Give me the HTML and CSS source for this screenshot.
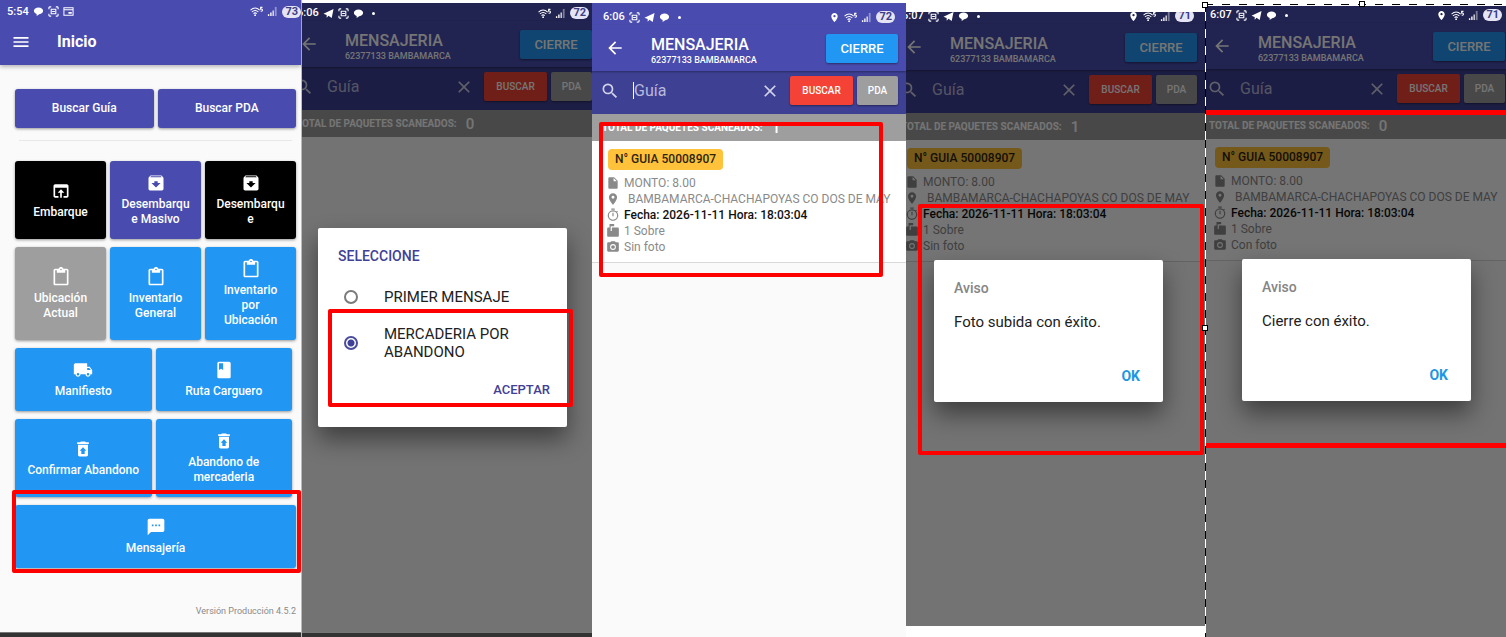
FILE: index.html
```
<!DOCTYPE html>
<html lang="es">
<head>
<meta charset="utf-8">
<title>Mensajería</title>
<link rel="stylesheet" href="styles.css">
</head>
<body>
<svg class="defs" aria-hidden="true">
  <symbol id="chat" viewBox="0 0 24 24"><path d="M12 3C6.500 3 2 6 2 10.500 2 14 5 17 8 17.600V22l5.500-4.200C19 17.500 22 14.500 22 10.500 22 6 17.500 3 12 3z"/></symbol>
  <symbol id="frame" viewBox="0 0 24 24"><path fill="none" stroke="currentColor" stroke-width="2.400" d="M2 7V4q0-2 2-2h3M17 2h3q2 0 2 2v3M22 17v3q0 2-2 2h-3M7 22H4q-2 0-2-2v-3M7 7h10v10H7zM9 12h6"/></symbol>
  <symbol id="news" viewBox="0 0 24 24"><path fill="none" stroke="currentColor" stroke-width="2.200" d="M2 4h20v16H2zM2 8h20M13 14h5v2h-5z"/></symbol>
  <symbol id="send" viewBox="0 0 24 24"><path d="M1 12.500 23 2l-4 20-7-5-4 4v-6z"/></symbol>
  <symbol id="wifi" viewBox="0 0 28 24"><path fill="none" stroke="currentColor" stroke-width="2.200" d="M1 9q10-9 20 0M4 13q7-6 14 0M7.500 16.500q3.500-3 7 0M27 3h-4v4q4-1 4 2t-4 2"/><circle cx="11" cy="20" r="2"/></symbol>
  <symbol id="signal" viewBox="0 0 24 24"><path d="M2 18h3v4H2zM7 14h3v8H7z"/><path opacity=".85" d="M12 10h3v12h-3z"/><path opacity=".4" d="M17 2h4v20h-4z"/></symbol>
  <symbol id="pin" viewBox="0 0 24 24"><path d="M12 2C8.130 2 5 5.130 5 9c0 5.250 7 13 7 13s7-7.750 7-13c0-3.870-3.130-7-7-7zm0 9.500a2.500 2.500 0 0 1 0-5 2.500 2.500 0 0 1 0 5z"/></symbol>
  <symbol id="menu" viewBox="0 0 24 24"><path d="M3 18h18v-2H3v2zm0-5h18v-2H3v2zm0-7v2h18V6H3z"/></symbol>
  <symbol id="back" viewBox="0 0 24 24"><path d="M20 11H7.830l5.590-5.590L12 4l-8 8 8 8 1.410-1.410L7.830 13H20v-2z"/></symbol>
  <symbol id="search" viewBox="0 0 24 24"><path d="M15.500 14h-.79l-.28-.27A6.470 6.470 0 0 0 16 9.500 6.500 6.500 0 1 0 9.500 16c1.610 0 3.090-.59 4.230-1.570l.27.28v.79l5 4.990L20.490 19l-4.990-5zm-6 0C7.010 14 5 11.990 5 9.500S7.010 5 9.500 5 14 7.010 14 9.500 11.990 14 9.500 14z"/></symbol>
  <symbol id="close" viewBox="0 0 24 24"><path d="M19 6.410 17.590 5 12 10.590 6.410 5 5 6.410 10.590 12 5 17.590 6.410 19 12 13.410 17.590 19 19 17.590 13.410 12z"/></symbol>
  <symbol id="open" viewBox="0 0 24 24"><path d="M19 4H5c-1.110 0-2 .9-2 2v12c0 1.100.89 2 2 2h4v-2H5V8h14v10h-4v2h4c1.100 0 2-.9 2-2V6c0-1.100-.89-2-2-2zm-7 6-4 4h3v6h2v-6h3l-4-4z"/></symbol>
  <symbol id="archive" viewBox="0 0 24 24"><path d="m20.540 5.230-1.390-1.680C18.880 3.210 18.470 3 18 3H6c-.47 0-.88.21-1.160.55L3.460 5.230C3.170 5.570 3 6.020 3 6.500V19c0 1.100.9 2 2 2h14c1.100 0 2-.9 2-2V6.500c0-.48-.17-.93-.46-1.270zM12 17.500 6.500 12H10v-2h4v2h3.500L12 17.500zM5.120 5l.81-1h12l.94 1H5.120z"/></symbol>
  <symbol id="paste" viewBox="0 0 24 24"><path d="M19 2h-4.180C14.400.84 13.300 0 12 0S9.600.84 9.180 2H5c-1.100 0-2 .9-2 2v16c0 1.100.9 2 2 2h14c1.100 0 2-.9 2-2V4c0-1.100-.9-2-2-2zm-7 0c.55 0 1 .45 1 1s-.45 1-1 1-1-.45-1-1 .45-1 1-1zm7 18H5V4h2v3h10V4h2v16z"/></symbol>
  <symbol id="truck" viewBox="0 0 24 24"><path d="M20 8h-3V4H3c-1.100 0-2 .9-2 2v11h2c0 1.660 1.340 3 3 3s3-1.340 3-3h6c0 1.660 1.340 3 3 3s3-1.340 3-3h2v-5l-3-4zM6 18.500a1.500 1.500 0 1 1 0-3 1.500 1.500 0 0 1 0 3zm13.500-9 1.960 2.500H17V9.500h2.500zm-1.500 9a1.500 1.500 0 1 1 0-3 1.500 1.500 0 0 1 0 3z"/></symbol>
  <symbol id="book" viewBox="0 0 24 24"><path fill-rule="evenodd" d="M18 2H6c-1.100 0-2 .9-2 2v16c0 1.100.9 2 2 2h12c1.100 0 2-.9 2-2V4c0-1.100-.9-2-2-2zM6 4h5v8l-2.500-1.500L6 12V4z"/></symbol>
  <symbol id="restore" viewBox="0 0 24 24"><path d="M19 4h-3.500l-1-1h-5l-1 1H5v2h14zM6 7v12c0 1.100.9 2 2 2h8c1.100 0 2-.9 2-2V7H6zm8 7v4h-4v-4H8l4-4 4 4h-2z"/></symbol>
  <symbol id="sms" viewBox="0 0 24 24"><path d="M20 2H4c-1.100 0-1.990.9-1.990 2L2 22l4-4h14c1.100 0 2-.9 2-2V4c0-1.100-.9-2-2-2zM9 11H7V9h2v2zm4 0h-2V9h2v2zm4 0h-2V9h2v2z"/></symbol>
  <symbol id="file" viewBox="0 0 24 24"><path d="M6 2c-1.100 0-2 .9-2 2v16c0 1.100.9 2 2 2h12c1.100 0 2-.9 2-2V8l-6-6H6zm7 7V3.500L18.500 9H13z"/></symbol>
  <symbol id="timer" viewBox="0 0 24 24"><path d="M15 1H9v2h6V1zm-4 13h2V8h-2v6zm8.030-6.610 1.420-1.420c-.43-.51-.9-.99-1.410-1.410l-1.420 1.420A8.960 8.960 0 0 0 12 4a9 9 0 1 0 7.030 3.390zM12 20a7 7 0 1 1 0-14 7 7 0 0 1 0 14z"/></symbol>
  <symbol id="mailbox" viewBox="0 0 24 24"><path d="M20 6H10v6H8V4h6V0H6v6H4c-1.100 0-2 .9-2 2v12c0 1.100.9 2 2 2h16c1.100 0 2-.9 2-2V8c0-1.100-.9-2-2-2z"/></symbol>
  <symbol id="camera" viewBox="0 0 24 24"><circle cx="12" cy="12" r="3.200"/><path d="M9 2 7.170 4H4c-1.100 0-2 .9-2 2v12c0 1.100.9 2 2 2h16c1.100 0 2-.9 2-2V6c0-1.100-.9-2-2-2h-3.170L15 2H9zm3 15a5 5 0 1 1 0-10 5 5 0 0 1 0 10z"/></symbol>
</svg>

<main class="board">
  <section class="column home">
    <header class="home-top">
      <div class="status">
        <span>5:54</span><svg><use href="#chat"/></svg><svg><use href="#frame"/></svg><svg><use href="#news"/></svg>
        <span class="spacer"></span>
        <svg class="wifi"><use href="#wifi"/></svg><svg><use href="#signal"/></svg><span class="battery">73</span>
      </div>
      <div class="home-bar">
        <button class="icon-button" aria-label="Menú"><svg><use href="#menu"/></svg></button>
        <h1>Inicio</h1>
      </div>
    </header>
    <div class="home-body">
      <div class="tiles two search-tiles">
        <button class="tile indigo">Buscar Guía</button>
        <button class="tile indigo">Buscar PDA</button>
      </div>
      <hr>
      <div class="tiles three">
        <button class="tile black"><svg><use href="#open"/></svg>Embarque</button>
        <button class="tile indigo"><svg><use href="#archive"/></svg>Desembarque Masivo</button>
        <button class="tile black"><svg><use href="#archive"/></svg>Desembarque</button>
        <button class="tile gray"><svg><use href="#paste"/></svg>Ubicación Actual</button>
        <button class="tile"><svg><use href="#paste"/></svg>Inventario General</button>
        <button class="tile"><svg><use href="#paste"/></svg>Inventario por Ubicación</button>
      </div>
      <div class="tiles two inset">
        <button class="tile"><svg><use href="#truck"/></svg>Manifiesto</button>
        <button class="tile"><svg><use href="#book"/></svg>Ruta Carguero</button>
        <button class="tile"><svg><use href="#restore"/></svg>Confirmar Abandono</button>
        <button class="tile"><svg><use href="#restore"/></svg>Abandono de mercaderia</button>
      </div>
      <div class="tiles">
        <button class="tile"><svg><use href="#sms"/></svg>Mensajería</button>
      </div>
      <p class="version">Versión Producción 4.5.2</p>
    </div>
    <div class="nav-strip"></div>
    <div class="mark mark-home"></div>
  </section>

  <section class="column col-select">
    <div class="phone">
      <div class="screen">
        <div class="status">
          <span>6:06</span><svg><use href="#send"/></svg><svg><use href="#frame"/></svg><svg><use href="#chat"/></svg><i class="dot"></i>
          <span class="spacer"></span>
          <svg class="wifi"><use href="#wifi"/></svg><svg><use href="#signal"/></svg><span class="battery">72</span>
        </div>
        <header class="bar">
          <button class="icon-button" aria-label="Volver"><svg><use href="#back"/></svg></button>
          <div class="heading"><h2>MENSAJERIA</h2><p>62377133 BAMBAMARCA</p></div>
          <button class="action cierre">CIERRE</button>
        </header>
        <form class="search">
          <svg><use href="#search"/></svg>
          <input class="field" type="text" placeholder="Guía" aria-label="Guía">
          <button type="button" class="icon-button" aria-label="Limpiar"><svg><use href="#close"/></svg></button>
          <button type="button" class="action buscar">BUSCAR</button>
          <button type="button" class="action pda">PDA</button>
        </form>
        <p class="total">TOTAL DE PAQUETES SCANEADOS: <b>0</b></p>
        <div class="scrim">
          <form class="dialog choice" role="dialog" aria-label="Seleccione">
            <h3>SELECCIONE</h3>
            <label><input type="radio" name="tipo">PRIMER MENSAJE</label>
            <label><input type="radio" name="tipo" checked>MERCADERIA POR ABANDONO</label>
            <button type="button" class="confirm">ACEPTAR</button>
          </form>
        </div>
      </div>
    </div>
    <div class="nav-strip"></div>
    <div class="mark mark-select"></div>
  </section>

  <section class="column col-list">
    <div class="phone">
      <div class="screen">
        <div class="status">
          <span>6:06</span><svg><use href="#frame"/></svg><svg><use href="#send"/></svg><svg><use href="#chat"/></svg><i class="dot"></i>
          <span class="spacer"></span>
          <svg><use href="#pin"/></svg><svg class="wifi"><use href="#wifi"/></svg><svg><use href="#signal"/></svg><span class="battery">72</span>
        </div>
        <header class="bar">
          <button class="icon-button" aria-label="Volver"><svg><use href="#back"/></svg></button>
          <div class="heading"><h2>MENSAJERIA</h2><p>62377133 BAMBAMARCA</p></div>
          <button class="action cierre">CIERRE</button>
        </header>
        <form class="search">
          <svg><use href="#search"/></svg>
          <input class="field caret" type="text" placeholder="Guía" aria-label="Guía">
          <button type="button" class="icon-button" aria-label="Limpiar"><svg><use href="#close"/></svg></button>
          <button type="button" class="action buscar">BUSCAR</button>
          <button type="button" class="action pda">PDA</button>
        </form>
        <p class="total">TOTAL DE PAQUETES SCANEADOS: <b>1</b></p>
        <article class="package">
          <h3>N° GUIA 50008907</h3>
          <p><svg><use href="#file"/></svg><span>MONTO: 8.00</span></p>
          <p><svg><use href="#pin"/></svg><span class="route">BAMBAMARCA-CHACHAPOYAS CO DOS DE MAY</span></p>
          <p class="date"><svg><use href="#timer"/></svg><span>Fecha: 2026-11-11 Hora: 18:03:04</span></p>
          <p><svg><use href="#mailbox"/></svg><span>1 Sobre</span></p>
          <p><svg><use href="#camera"/></svg><span>Sin foto</span></p>
        </article>
      </div>
    </div>
    <div class="mark mark-list"></div>
  </section>

  <section class="column col-photo">
    <div class="phone">
      <div class="screen">
        <div class="status">
          <span>6:07</span><svg><use href="#frame"/></svg><svg><use href="#send"/></svg><svg><use href="#chat"/></svg><i class="dot"></i>
          <span class="spacer"></span>
          <svg><use href="#pin"/></svg><svg class="wifi"><use href="#wifi"/></svg><svg><use href="#signal"/></svg><span class="battery">71</span>
        </div>
        <header class="bar">
          <button class="icon-button" aria-label="Volver"><svg><use href="#back"/></svg></button>
          <div class="heading"><h2>MENSAJERIA</h2><p>62377133 BAMBAMARCA</p></div>
          <button class="action cierre">CIERRE</button>
        </header>
        <form class="search">
          <svg><use href="#search"/></svg>
          <input class="field" type="text" placeholder="Guía" aria-label="Guía">
          <button type="button" class="icon-button" aria-label="Limpiar"><svg><use href="#close"/></svg></button>
          <button type="button" class="action buscar">BUSCAR</button>
          <button type="button" class="action pda">PDA</button>
        </form>
        <p class="total">TOTAL DE PAQUETES SCANEADOS: <b>1</b></p>
        <article class="package">
          <h3>N° GUIA 50008907</h3>
          <p><svg><use href="#file"/></svg><span>MONTO: 8.00</span></p>
          <p><svg><use href="#pin"/></svg><span class="route">BAMBAMARCA-CHACHAPOYAS CO DOS DE MAY</span></p>
          <p class="date"><svg><use href="#timer"/></svg><span>Fecha: 2026-11-11 Hora: 18:03:04</span></p>
          <p><svg><use href="#mailbox"/></svg><span>1 Sobre</span></p>
          <p><svg><use href="#camera"/></svg><span>Sin foto</span></p>
        </article>
        <div class="scrim">
          <div class="dialog notice" role="dialog" aria-label="Aviso">
            <h3>Aviso</h3>
            <p>Foto subida con éxito.</p>
            <button class="confirm">OK</button>
          </div>
        </div>
      </div>
    </div>
    <div class="mark mark-photo"></div>
  </section>

  <section class="column col-close">
    <div class="phone">
      <div class="screen">
        <div class="status">
          <span>6:07</span><svg><use href="#frame"/></svg><svg><use href="#send"/></svg><svg><use href="#chat"/></svg><i class="dot"></i>
          <span class="spacer"></span>
          <svg><use href="#pin"/></svg><svg class="wifi"><use href="#wifi"/></svg><svg><use href="#signal"/></svg><span class="battery">71</span>
        </div>
        <header class="bar">
          <button class="icon-button" aria-label="Volver"><svg><use href="#back"/></svg></button>
          <div class="heading"><h2>MENSAJERIA</h2><p>62377133 BAMBAMARCA</p></div>
          <button class="action cierre">CIERRE</button>
        </header>
        <form class="search">
          <svg><use href="#search"/></svg>
          <input class="field" type="text" placeholder="Guía" aria-label="Guía">
          <button type="button" class="icon-button" aria-label="Limpiar"><svg><use href="#close"/></svg></button>
          <button type="button" class="action buscar">BUSCAR</button>
          <button type="button" class="action pda">PDA</button>
        </form>
        <p class="total">TOTAL DE PAQUETES SCANEADOS: <b>0</b></p>
        <article class="package">
          <h3>N° GUIA 50008907</h3>
          <p><svg><use href="#file"/></svg><span>MONTO: 8.00</span></p>
          <p><svg><use href="#pin"/></svg><span class="route">BAMBAMARCA-CHACHAPOYAS CO DOS DE MAY</span></p>
          <p class="date"><svg><use href="#timer"/></svg><span>Fecha: 2026-11-11 Hora: 18:03:04</span></p>
          <p><svg><use href="#mailbox"/></svg><span>1 Sobre</span></p>
          <p><svg><use href="#camera"/></svg><span>Con foto</span></p>
        </article>
        <div class="scrim">
          <div class="dialog notice" role="dialog" aria-label="Aviso">
            <h3>Aviso</h3>
            <p>Cierre con éxito.</p>
            <button class="confirm">OK</button>
          </div>
        </div>
      </div>
    </div>
    <div class="mark mark-close"></div>
    <div class="selection"><i class="handle corner"></i><i class="handle top"></i><i class="handle side"></i></div>
  </section>
</main>
</body>
</html>
```
FILE: styles.css
```
* { box-sizing: border-box; }
body { margin: 0; background: #fff; font-family: Roboto, "Liberation Sans", sans-serif; font-size: 12px; color: #212121; }
h1, h2, h3, p { margin: 0; }
button, input { font-family: inherit; }
button { border: 0; padding: 0; cursor: pointer; }
svg { fill: currentColor; flex: none; display: block; }
.defs { position: absolute; width: 0; height: 0; }

.board { display: grid; grid-template-columns: 302fr 290fr 314fr 300fr 300fr; min-height: 100vh; overflow: hidden; }
.column { position: relative; display: flex; flex-direction: column; min-width: 0; }
.phone { flex: 1; display: flex; overflow: hidden; background: #fafafa; }
.screen { flex: 1; min-width: 0; position: relative; background: #fafafa; }
.nav-strip { height: 5px; background: #333; border-top: 1px solid #777; }

/* Status row */
.status { display: flex; align-items: center; gap: 4px; height: 22px; padding: 6px 11px 0; font-size: 11px; font-weight: 500; line-height: 16px; color: #fff; }
.status svg { width: 11px; height: 11px; }
.status .wifi { width: 13px; }
.spacer { flex: 1; }
.dot { width: 3px; height: 3px; margin-left: 4px; border-radius: 50%; background: #fff; }
.battery { padding: 0 3px; border-radius: 6px; background: #e4e4f4; color: #3c3e85; font-size: 11px; font-weight: 700; line-height: 12px; }

/* Home */
.home { background: #fafafa; border-right: 1px solid #bbb; }
.home-top { height: 65px; background: #494cae; color: #fff; box-shadow: 0 2px 4px #0004; }
.home-top .status { padding: 1px 0 0 7px; }
.home-bar { display: flex; align-items: center; gap: 26px; height: 40px; padding-left: 11px; }
.home-bar h1 { font-size: 16px; line-height: 20px; font-weight: 700; }
.icon-button { display: flex; background: none; color: inherit; }
.icon-button svg { width: 20px; height: 20px; }
.home-body { flex: 1; display: flex; flex-direction: column; gap: 8px; padding: 24px 5px 0 15px; }
.tiles { display: grid; gap: 8px 4px; }
.two { grid-template-columns: 1fr 1fr; }
.three { grid-template-columns: 1fr 1fr 1fr; }
.inset { padding-right: 4px; }
.home-body hr { align-self: stretch; margin: 4px 4px 12px; border: 0; border-top: 1px solid #e8e8e8; }
.tile { display: flex; flex-direction: column; align-items: center; justify-content: center; gap: 4px; min-width: 0; padding: 12px 10px; border-radius: 3px; background: #2196f3; color: #fff; font-size: 12px; font-weight: 500; line-height: 15px; text-align: center; overflow-wrap: anywhere; box-shadow: 0 1px 3px #0006; }
.tile svg { width: 20px; height: 20px; }
.indigo { background: #494cae; }
.black { background: #000; }
.gray { background: #9e9e9e; }
.version { margin-top: 28px; text-align: right; font-size: 9px; line-height: 14px; color: #8a8a8a; }

/* Message screens */
.col-select { padding-top: 3px; }
.col-select .screen { margin: -4px -8px 0 -16px; }
.col-list { padding-top: 3px; }
.col-photo { padding: 12px 1px 11px 0; }
.col-photo .screen { margin: -10px 0 0 -15px; }
.col-close { padding-top: 6px; }
.col-close .screen { margin: -5px -7px 0 -7px; }
.screen > .status, .bar { background: #494cae; }
.bar { position: relative; display: flex; align-items: center; height: 46px; padding: 0 8px 0 13px; color: #fff; box-shadow: 0 1px 2px #0005; }
.heading { flex: 1; padding: 6px 0 0 26px; }
.heading h2 { font-size: 16px; font-weight: 500; line-height: 18px; }
.heading p { font-size: 9px; font-weight: 500; line-height: 12px; }
.action { height: 29px; border-radius: 2px; color: #fff; font-weight: 500; box-shadow: 0 1px 2px #0006; }
.cierre { width: 72px; background: #2196f3; font-size: 13px; }
.buscar { width: 63px; margin: 0 4px 0 10px; background: #f44336; font-size: 10px; }
.pda { width: 41px; background: #9e9e9e; font-size: 10px; }
.search { display: flex; align-items: center; height: 43px; padding: 0 8px 4px; background: #3e4094; color: #d2d2ea; }
.search > svg { width: 20px; height: 20px; }
.field { flex: 1; min-width: 0; height: 20px; margin-left: 13px; padding: 0; border: 0; outline: 0; background: none; color: #fff; font-size: 16px; }
.field::placeholder { color: #b8b9dc; opacity: 1; }
.caret { height: 17px; border-left: 1px solid #fff; }
.total { display: flex; align-items: center; gap: 9px; height: 27px; padding-left: 10px; background: #9e9e9e; color: #fff; font-size: 10px; font-weight: 700; }
.total b { font-size: 15px; font-weight: 500; }
.package { padding: 8px 12px 7px 14px; background: #fff; border-bottom: 1px solid #d8d8d8; color: #8a8a8a; }
.package h3 { width: max-content; margin: 0 0 5px 2px; padding: 0 7px; border-radius: 4px; background: #ffc23a; color: #2e2410; font-size: 12px; font-weight: 500; line-height: 21px; }
.package p { display: flex; align-items: center; gap: 4px; height: 16px; white-space: nowrap; font-size: 12px; line-height: 16px; }
.package p svg { width: 14px; height: 14px; }
.package .route { padding-left: 4px; }
.package .date span { color: #111; font-weight: 500; }

/* Dialogs */
.scrim { position: absolute; inset: 0; z-index: 1; background: rgba(0, 0, 0, .54); }
.screen > .status { position: relative; }
.screen:has(.scrim) > .status { z-index: 2; background: none; }
.screen:has(.scrim) { background: linear-gradient(#494cae 22px, #fafafa 22px); }
.dialog { display: flex; flex-direction: column; padding: 18px 17px 27px 20px; border-radius: 2px; background: #fff; box-shadow: 0 12px 24px #0007; }
.dialog h3 { font-size: 14px; font-weight: 500; line-height: 20px; }
.dialog label, .dialog p { font-size: 15px; line-height: 18px; }
.confirm { align-self: flex-end; background: none; font-size: 13px; font-weight: 500; line-height: 20px; }
.choice { margin: 229px 33px 0 32px; }
.choice h3 { margin-bottom: 13px; color: #3f4196; }
.choice label { display: flex; align-items: center; gap: 26px; padding: 9px 30px 9px 6px; }
.choice label + label { padding-top: 10px; }
.choice input { appearance: none; flex: none; width: 14px; height: 14px; margin: 0; border: 2px solid #7b7b7b; border-radius: 50%; }
.choice input:checked { border-color: #4a4d9c; background: radial-gradient(#3f4196 0 3px, #fff 4px); }
.choice .confirm { margin-top: 10px; color: #3f4196; }
.notice { margin: 258px 42px 0 43px; padding: 18px 23px 16px 20px; }
.notice h3 { color: #858585; }
.notice p { margin: 15px 0 35px; }
.notice .confirm { color: #2196e3; font-size: 14px; font-weight: 700; }

/* Red annotation frames and the editor's selection outline */
.mark { position: absolute; z-index: 3; border: 4px solid #f00; border-radius: 2px; pointer-events: none; }
.mark-home { left: 12px; right: 0; top: 490px; height: 83px; }
.mark-select { left: 26px; right: 19px; top: 309px; height: 98px; }
.mark-list { left: 7px; right: 23px; top: 122px; height: 155px; }
.mark-photo { left: 12px; right: 2px; top: 204px; height: 251px; }
.mark-close { left: 0; right: 0; top: 110px; height: 338px; border-width: 5px 0; border-radius: 0; }
.selection { position: absolute; z-index: 4; left: -1px; right: 0; top: 4px; bottom: 0; pointer-events: none; background: repeating-linear-gradient(90deg, #000 0 8px, #fff 8px 17px) top / 100% 1px no-repeat, repeating-linear-gradient(#000 0 8px, #fff 8px 17px) left / 1px 100% no-repeat; }
.handle { position: absolute; width: 6px; height: 6px; border: 1px solid #000; background: #fff; }
.corner { left: -3px; top: -2px; }
.top { left: 51%; top: -3px; }
.side { left: -3px; top: 321px; }
```
